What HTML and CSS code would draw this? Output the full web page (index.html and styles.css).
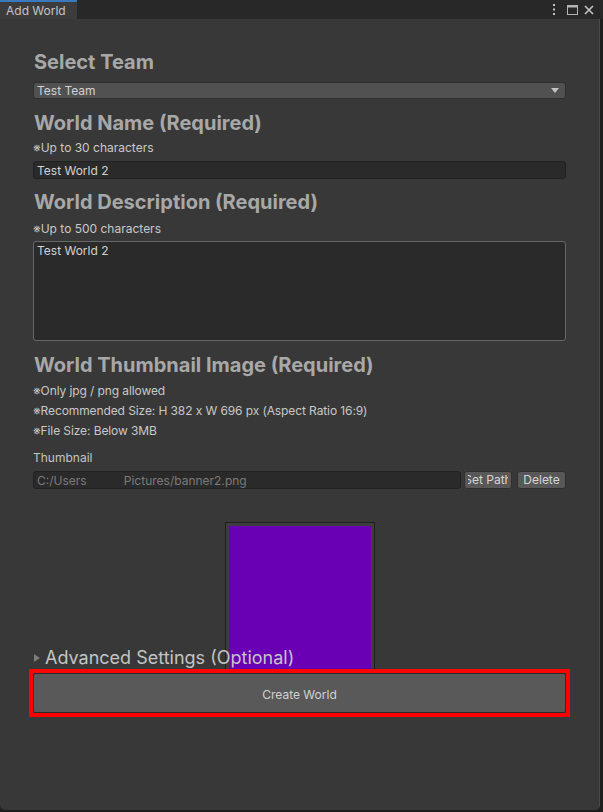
FILE: index.html
```html
<!DOCTYPE html>
<html lang="en">
<head>
<meta charset="utf-8">
<title>Add World</title>
<link rel="stylesheet" href="styles.css">
</head>
<body>
<div class="window">
  <div class="tabbar">
    <div class="tab">Add World</div>
    <div class="tab-tools">
      <svg class="tool" width="4" height="11" viewBox="0 0 4 11"><rect x="1" y="0" width="2" height="2" fill="#c4c4c4"/><rect x="1" y="4.5" width="2" height="2" fill="#c4c4c4"/><rect x="1" y="9" width="2" height="2" fill="#c4c4c4"/></svg>
      <svg class="tool" width="11" height="10" viewBox="0 0 11 10"><rect x="0.5" y="0.5" width="10" height="9" fill="none" stroke="#b4b4b4"/><rect x="0.5" y="0.5" width="10" height="2" fill="#b4b4b4"/></svg>
      <svg class="tool" width="10" height="10" viewBox="0 0 10 10"><path d="M1 1L9 9M9 1L1 9" stroke="#c4c4c4" stroke-width="1.6"/></svg>
    </div>
  </div>
  <div class="panel">
    <h2 class="heading first">Select Team</h2>
    <div class="dropdown">
      <span>Test Team</span>
      <svg class="arrow" width="8" height="5" viewBox="0 0 8 5"><path d="M0 0H8L4 5Z" fill="#c4c4c4"/></svg>
    </div>

    <h2 class="heading">World Name (Required)</h2>
    <p class="note">※Up to 30 characters</p>
    <div class="field">Test World 2</div>

    <h2 class="heading h-desc">World Description (Required)</h2>
    <p class="note note-desc">※Up to 500 characters</p>
    <div class="textarea">Test World 2</div>

    <h2 class="heading">World Thumbnail Image (Required)</h2>
    <ul class="notes">
      <li>※Only jpg / png allowed</li>
      <li>※Recommended Size: H 382 x W 696 px (Aspect Ratio 16:9)</li>
      <li>※File Size: Below 3MB</li>
    </ul>
    <p class="label">Thumbnail</p>
    <div class="path-row">
      <div class="field path">C:/Users&nbsp;&nbsp;&nbsp;&nbsp;&nbsp;&nbsp;&nbsp;&nbsp;&nbsp;&nbsp;&nbsp;Pictures/banner2.png</div>
      <div class="btn small set"><span class="clip">Set Path</span></div>
      <div class="btn small del"><span>Delete</span></div>
    </div>

    <div class="preview"><div class="preview-img"></div></div>

    <div class="foldout">
      <svg class="fold-arrow" width="6" height="8" viewBox="0 0 6 8"><path d="M0 0L6 4L0 8Z" fill="#7c7c7c"/></svg>
      <span>Advanced Settings (Optional)</span>
    </div>

    <div class="highlight">
      <div class="btn create">Create World</div>
    </div>
  </div>
</div>
</body>
</html>
```
FILE: styles.css
```css
* { box-sizing: border-box; }
html, body { margin: 0; padding: 0; }
body {
  background: #1e1e1e;
  font-family: Inter, "Noto Sans", "DejaVu Sans", sans-serif;
  color: #c4c4c4;
  width: 603px;
  height: 812px;
  overflow: hidden;
}
.window { width: 603px; }
.tabbar {
  height: 19px;
  background: #282828;
  display: flex;
  align-items: stretch;
}
.tab {
  width: 77px;
  background: #3c3c3c;
  border-top: 2px solid #3a79bb;
  font-size: 12px;
  line-height: 18px;
  padding-left: 6px;
  color: #c4c4c4;
}
.tab-tools {
  margin-left: auto;
  display: flex;
  align-items: center;
  gap: 0;
  padding-right: 9px;
}
.tool { display: block; }
.tool:nth-child(1) { margin-right: 11px; }
.tool:nth-child(2) { margin-right: 6px; }
.panel {
  width: 600px;
  height: 791px;
  background: #383838;
  border-right: 1px solid #4a4a4a;
  border-radius: 0 0 5px 5px;
  padding: 31px 33px 0 33px;
  display: flex;
  flex-direction: column;
}
.heading {
  margin: 12px 0 0 0;
  font-size: 20px;
  line-height: 24px;
  font-weight: 700;
  color: #a8a8a8;
  padding-left: 1px;
}
.heading.first { margin-top: 0; }
.h-desc { margin-top: 11px; }
.dropdown {
  margin-top: 8px;
  height: 17px;
  background: #515151;
  border: 1px solid #2e2e2e;
  border-radius: 3px;
  display: flex;
  align-items: center;
  padding: 0 6px 0 3px;
  font-size: 12px;
  color: #d2d2d2;
}
.dropdown .arrow { margin-left: auto; }
.note {
  margin: 5px 0 0 0;
  font-size: 12px;
  line-height: 16px;
  color: #c8c8c8;
}
.note-desc { margin-top: 7px; }
.field {
  margin-top: 5px;
  height: 18px;
  background: #2a2a2a;
  border: 1px solid #212121;
  border-radius: 3px;
  font-size: 12px;
  line-height: 17px;
  padding-left: 3px;
  color: #d2d2d2;
  white-space: nowrap;
  overflow: hidden;
}
.textarea {
  margin-top: 4px;
  height: 100px;
  background: #2a2a2a;
  border: 1px solid #676767;
  border-radius: 3px;
  font-size: 12px;
  line-height: 16px;
  padding: 1px 3px;
  color: #d2d2d2;
}
.notes {
  list-style: none;
  margin: 4px 0 0 0;
  padding: 0;
  font-size: 12px;
  line-height: 20px;
  color: #c8c8c8;
  letter-spacing: -0.1px;
}
.label {
  margin: 9px 0 0 0;
  font-size: 12px;
  line-height: 16px;
  color: #c4c4c4;
}
.path-row {
  margin-top: 5px;
  display: flex;
  align-items: flex-start;
  height: 18px;
}
.path-row .field.path {
  margin-top: 0;
  width: 428px;
  color: #7a7a7a;
}
.btn {
  background: #585858;
  border: 1px solid #303030;
  border-radius: 3px;
  color: #d6d6d6;
  font-size: 12px;
  display: flex;
  align-items: center;
  justify-content: center;
  white-space: nowrap;
  overflow: hidden;
}
.btn.small {
  height: 18px;
  width: 49px;
  padding: 0 4px;
  line-height: 16px;
}
.btn.set { margin-left: 3px; width: 48px; padding: 0; }
.clip {
  display: flex;
  justify-content: center;
  width: 40px;
  overflow: hidden;
  flex: none;
}
.btn.del { margin-left: 5px; }
.preview {
  margin-top: 33px;
  align-self: center;
  width: 150px;
  height: 147px;
  border: 1px solid #1f1f1f;
  border-bottom: none;
  background: #3d3d3d;
  padding: 3px 3px 0 3px;
}
.preview-img {
  width: 100%;
  height: 100%;
  background: #6a00b4;
}
.foldout {
  margin-top: -22px;
  height: 22px;
  display: flex;
  align-items: center;
  font-size: 18px;
  line-height: 22px;
  color: #c4c4c4;
}
.fold-arrow { margin: 0 5px 0 1px; flex: none; }
.highlight {
  margin: 0 -4px;
  border: 4px solid #ff0000;
  height: 48px;
}
.btn.create {
  height: 40px;
  font-size: 12px;
  color: #d2d2d2;
  background: #595959;
  border-color: #2b2b2b;
  border-radius: 2px;
  padding-top: 2px;
}
```
